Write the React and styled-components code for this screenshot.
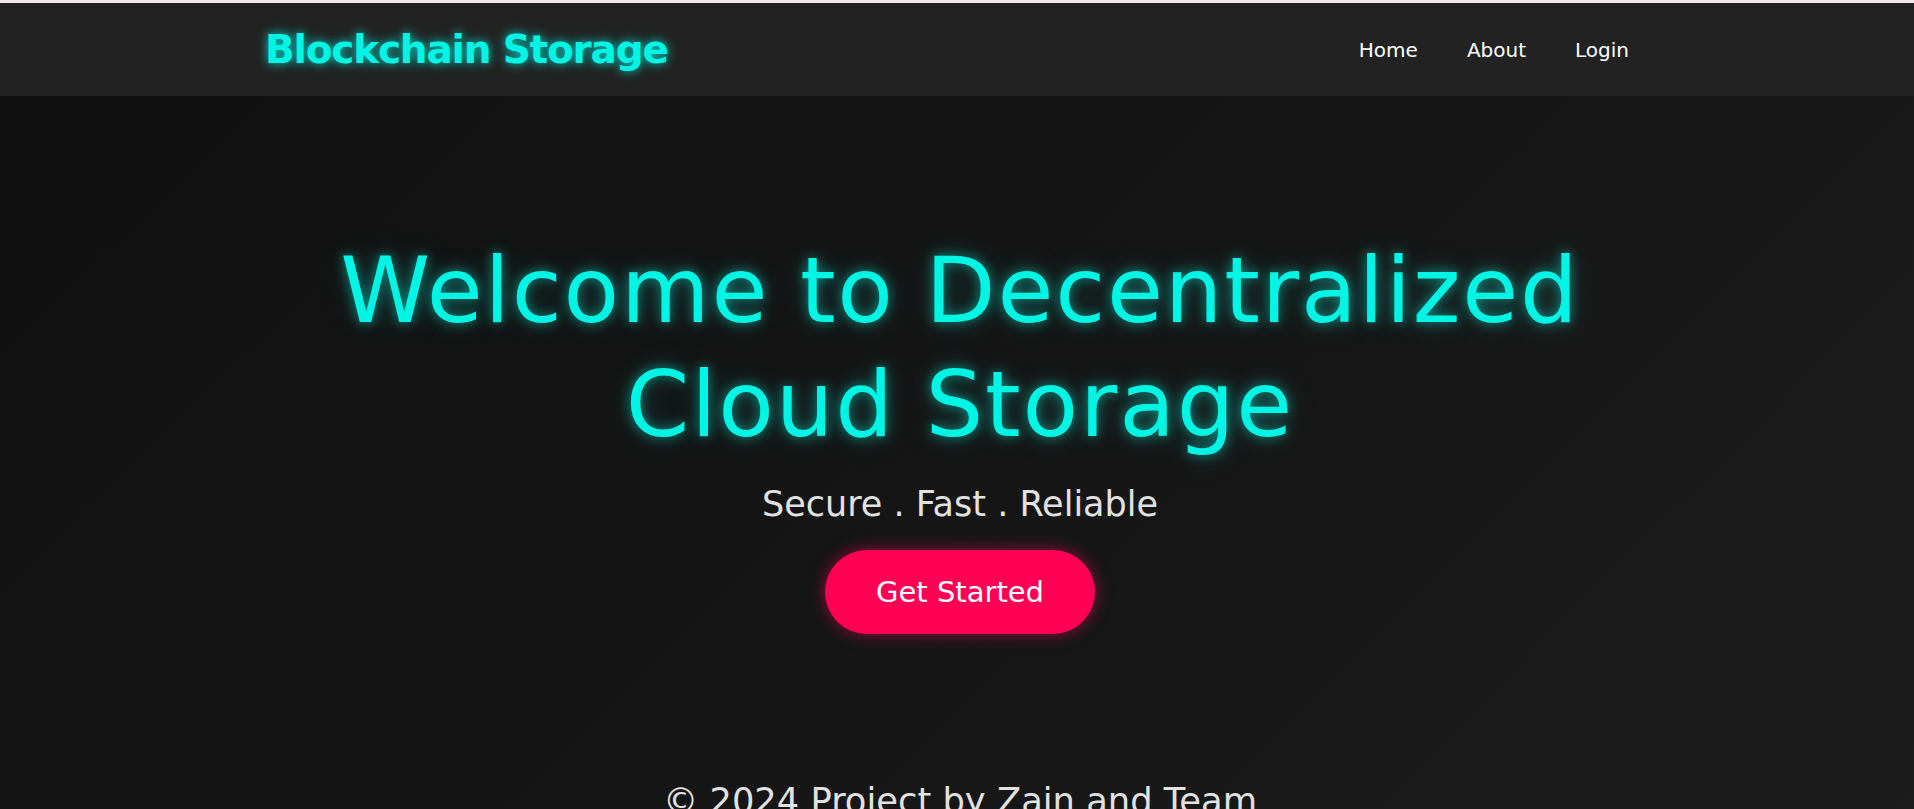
import React from "react";
import styled, {createGlobalStyle} from "styled-components";

const cyan = "#00f5e4";
const pink = "#ff0055";

const GlobalStyle = createGlobalStyle`
    html {
        background: #f4e8ec;
    }
    body {
        margin: 0;
        padding-top: 3px;
        font-family: "DejaVu Sans", "Liberation Sans", sans-serif;
        color: #e0e0e0;
    }
`;

const Page = styled.div`
    min-height: 806px;
    background: linear-gradient(135deg, #101010 0%, #151515 50%, #1c1c1c 100%);
    display: flex;
    flex-direction: column;
`;

const NavBar = styled.nav`
    height: 93px;
    background: #222;
    display: flex;
    align-items: center;
    justify-content: space-between;
    padding: 0 275px 0 265px;
`;

const Logo = styled.div`
    font-size: 39px;
    font-weight: 700;
    letter-spacing: -1.2px;
    color: ${cyan};
    text-shadow: 0 0 8px rgba(0, 245, 228, 0.7), 0 0 16px rgba(0, 245, 228, 0.3);
`;

const NavLinks = styled.ul`
    display: flex;
    gap: 29px;
    list-style: none;
    margin: 0;
    padding: 0;
`;

const NavLink = styled.li`
    font-size: 20px;
    color: #fff;
    padding: 0 10px;
`;

const Hero = styled.section`
    display: flex;
    flex-direction: column;
    align-items: center;
    text-align: center;
    padding: 138px 0 0 6px;
`;

const Title = styled.h1`
    margin: 0;
    font-size: 91px;
    font-weight: 400;
    line-height: 114px;
    letter-spacing: 1.8px;
    color: ${cyan};
    text-shadow: 0 0 12px rgba(0, 245, 228, 0.55), 0 0 28px rgba(0, 245, 228, 0.25);
`;

const Tagline = styled.p`
    margin: 22px 0 0;
    font-size: 35px;
    line-height: 41px;
    color: #e2e2e2;
`;

const CtaButton = styled.button`
    margin-top: 25px;
    height: 84px;
    padding: 0 51px;
    border: none;
    border-radius: 42px;
    background: ${pink};
    color: #fff;
    font-family: inherit;
    font-size: 29px;
    display: inline-flex;
    align-items: center;
    box-shadow: 0 0 16px rgba(255, 0, 85, 0.55);
    cursor: pointer;
`;

const Footer = styled.footer`
    padding: 146px 0 0 6px;
    text-align: center;
    font-size: 35.3px;
    line-height: 41px;
    color: #e2e2e2;
`;

const App = () => (
    <>
        <GlobalStyle />
        <Page>
            <NavBar>
                <Logo>Blockchain Storage</Logo>
                <NavLinks>
                    {["Home", "About", "Login"].map(link => <NavLink key={link}>{link}</NavLink>)}
                </NavLinks>
            </NavBar>
            <Hero>
                <Title>Welcome to Decentralized<br />Cloud Storage</Title>
                <Tagline>Secure . Fast . Reliable</Tagline>
                <CtaButton>Get Started</CtaButton>
            </Hero>
            <Footer>© 2024 Project by Zain and Team</Footer>
        </Page>
    </>
);

export default App;
